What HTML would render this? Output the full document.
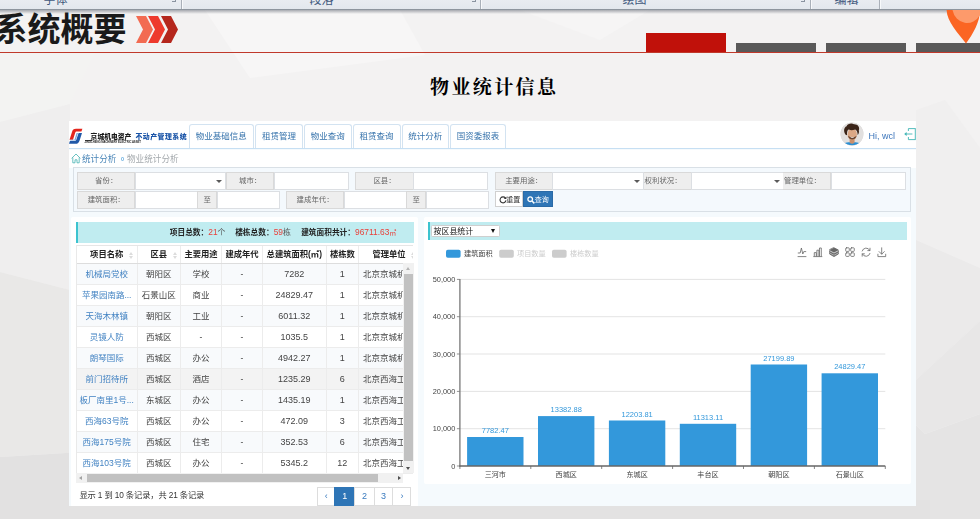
<!DOCTYPE html>
<html lang="zh-CN">
<head>
<meta charset="utf-8">
<title>系统概要 - 物业统计信息</title>
<style>
*{box-sizing:border-box;margin:0;padding:0}
html,body{width:980px;height:519px;overflow:hidden}
body{position:relative;font-family:"Liberation Sans","Noto Sans CJK SC",sans-serif;background:#f3f2f2;color:#333}
.abs{position:absolute}
#bg{position:absolute;left:0;top:0;width:980px;height:519px}
/* ribbon */
#ribbon{position:absolute;left:0;top:0;width:980px;height:10px;background:linear-gradient(#e9ecf1,#e3e7ed);border-bottom:1px solid #8e959e;overflow:hidden}
#ribbon span{position:absolute;top:-5.9px;font-size:12px;line-height:12px;color:#42597d;white-space:nowrap}
#ribbon i{position:absolute;top:0;width:1px;height:9px;background:#aab0b9;box-shadow:1px 0 0 #f8f9fb}
#ribshadow{position:absolute;left:0;top:10px;width:980px;height:4px;background:linear-gradient(rgba(115,120,130,.6),rgba(120,125,135,0))}
#ribbon b{position:absolute;top:-1px;width:4px;height:3px;border-right:1px solid #8a93a0;border-bottom:1px solid #8a93a0}
/* slide title */
#stitle{position:absolute;left:-5.6px;top:7px;font-size:33px;line-height:46px;font-weight:700;color:#1a1a1a;white-space:nowrap;letter-spacing:0}
#redline{position:absolute;left:0;top:52px;width:980px;height:1px;background:#c0392b}
.blk{position:absolute;height:9px;top:43px;background:#595959}
#title2{position:absolute;left:0;top:72.6px;width:988.4px;text-align:center;font-family:"Liberation Serif","Noto Serif CJK SC",serif;font-weight:700;font-size:19px;letter-spacing:2.4px;line-height:30px;color:#000}
/* app */
#app{position:absolute;left:69px;top:121px;width:847px;height:385px;background:#f5fafd;overflow:hidden}
#app>*{filter:blur(.25px)}
#hdr{position:absolute;left:0;top:0;width:847px;height:28px;background:#fff;border-bottom:1.4px solid #c6dff3}
.tab{position:absolute;top:2.8px;height:23.8px;border:1px solid #d3e3f1;border-bottom:none;border-radius:3px 3px 0 0;background:#fff;color:#3572ab;font-size:8.5px;line-height:23px;text-align:center;white-space:nowrap}

#logo1{position:absolute;left:21.6px;top:10.8px;font-size:6.8px;line-height:9px;font-weight:900;color:#1a1a1a;white-space:nowrap;letter-spacing:0}
#logo2{position:absolute;left:15.6px;top:19.4px;width:7px;height:.9px;background:#444}
#logo3{position:absolute;left:15.6px;top:20.2px;font-size:2.75px;line-height:4px;font-weight:700;color:#222;white-space:nowrap;letter-spacing:-.05px}
#logo4{position:absolute;left:66.4px;top:11.4px;font-size:6.9px;line-height:10px;font-weight:900;color:#1b55a8;white-space:nowrap;letter-spacing:.5px}
#hi{position:absolute;left:799.4px;top:8.8px;font-size:9px;line-height:12px;color:#3d76bb;white-space:nowrap}
#crumb{position:absolute;left:0;top:29px;width:847px;height:18px;background:#fff}
#crumb .a{position:absolute;left:13px;top:2.7px;font-size:8.6px;line-height:12px;color:#4a86b8;white-space:nowrap}
#crumb .b{position:absolute;left:58px;top:2.7px;font-size:8.6px;line-height:12px;color:#a4a9ad;white-space:nowrap}
#crumb .dot{position:absolute;left:52px;top:7.2px;width:3px;height:3.6px;border:.8px solid #8fc3e8;border-radius:1px}
#filter{position:absolute;left:4px;top:46.3px;width:838px;height:45.2px;border:1px solid #d9e0e6;background:#f4f9fd}
.fl{position:absolute;height:17.6px;background:#eee;border:1px solid #d9d9d9;font-size:7.4px;line-height:16px;color:#666;text-align:center;white-space:nowrap}
.fi{position:absolute;height:17.6px;background:#fff;border:1px solid #dcdfe3}
.fi.sel:after{content:"";position:absolute;right:3px;top:6.4px;border:3px solid transparent;border-top:3.4px solid #5a5a5a;border-bottom:none}
.fl.la{text-align:left;padding-left:.6px;border-left:none}
.r1{top:4px}.r2{top:23.2px}

.btn{position:absolute;height:16px;font-size:7px;line-height:15px;white-space:nowrap}
#breset{left:420.8px;width:28.6px;background:#fff;border:1px solid #d0d0d0;color:#333;padding-left:10.5px}
#bquery{left:449.2px;width:29.4px;background:#2e75b6;border:1px solid #2a6aa6;color:#fff;padding-left:10.5px}

#lp{position:absolute;left:2.4px;top:95.6px;width:347px;height:290px;background:#fff;border-radius:2px}
#rp{position:absolute;left:355px;top:95.6px;width:486.6px;height:267.6px;background:#fff;border-radius:2px}
.cbar{position:absolute;background:#c0ecf0;border-left:2.6px solid #3cc3cf}
#sum{left:4.4px;top:5px;width:338.4px;height:21px;font-size:7.7px;line-height:20.4px;color:#222;white-space:nowrap;font-weight:700}
#sum span{position:absolute;top:0}
#sum b{font-weight:400;color:#e8403a;font-size:8.4px}
#sum i{font-style:normal;font-weight:400;color:#555;font-size:7.8px}
#tbl{position:absolute;left:4.4px;top:28.8px;width:337.6px;height:229px;border-top:1px solid #e6e6e6;border-left:1px solid #e9e9e9;overflow:hidden}
.tr{position:absolute;left:0;width:340px;height:21px;border-bottom:1px solid #ececec;font-size:8.5px;line-height:20px;color:#444;white-space:nowrap}
.tr.h{height:18px;line-height:17px;font-weight:700;color:#222;font-size:8.3px;border-bottom:1px solid #ddd}
.tr.odd{background:#f8fafc}
.tr.hov{background:#f3f3f3}
.tr span{position:absolute;top:0;height:100%;text-align:center;border-right:1px solid #ececec;overflow:hidden}
.tr span.c1{left:0;width:60.8px;color:#4182c2}
.tr span.c2{left:60.8px;width:43.4px}
.tr span.c3{left:104.2px;width:41.1px}
.tr span.c4{left:145.3px;width:40.8px}
.tr span.c5{left:186.1px;width:63.8px;font-size:9px}
.tr span.c6{left:249.9px;width:32.4px;font-size:9px}
.tr span.c7{left:282.3px;width:62px;text-align:left;padding-left:4px;border-right:none}
.tr.h span.c1{color:#222}
.tr.h span{font-size:8.3px!important}
.tr.h span.c7{text-align:center;padding-left:0;padding-right:2px}
.sort{position:absolute;width:0;height:0;border:2.2px solid transparent}
.sort.u{border-bottom:3px solid #dcdcdc;border-top:none}
.sort.d{border-top:3px solid #dcdcdc;border-bottom:none}
#vsb{position:absolute;left:331.8px;top:46.8px;width:10.8px;height:209.4px;background:#f1f1f1}
#vsb .th{position:absolute;left:.8px;top:10.6px;width:9.4px;height:187.4px;background:#c1c1c1}
#hsb{position:absolute;left:4.4px;top:256.8px;width:327.4px;height:10px;background:#f1f1f1}
#hsb .th{position:absolute;left:11.4px;top:1px;width:290.6px;height:8px;background:#c1c1c1}
.arr{position:absolute;width:0;height:0;border:2.4px solid transparent}
#pinfo{position:absolute;left:8px;top:273.4px;font-size:8.25px;letter-spacing:-.12px;line-height:12px;color:#333;white-space:nowrap}
.pg{position:absolute;top:270px;height:19.4px;border:1px solid #ddd;background:#fff;color:#3a7bbf;font-size:9px;line-height:17.6px;text-align:center}
.pg.on{background:#2e75b6;border-color:#2e75b6;color:#fff}
#csel{position:absolute;left:.6px;top:3px;width:69.2px;height:12.8px;background:#fff;border:1px solid #cfcfcf;border-radius:1.5px;font-size:7.9px;line-height:11px;color:#111;padding-left:2px;white-space:nowrap}
#csel:after{content:"";position:absolute;right:3.4px;top:3.4px;border:2.5px solid transparent;border-top:4.2px solid #111;border-bottom:none}
</style>
</head>
<body>
<svg id="bg" viewBox="0 0 980 519">
<rect width="980" height="519" fill="#f3f2f2"/>
<polygon points="205,10 400,10 425,55 250,78" fill="#f7f6f6"/>
<polygon points="520,10 650,10 600,40" fill="#f6f5f5"/>
<polygon points="0,53 95,53 70,104 0,122" fill="#f3f3f2"/>
<polygon points="0,122 70,104 70,290 0,272" fill="#efeeee"/>
<polygon points="0,272 70,290 70,452.7 0,457" fill="#e9e8e7"/>
<polygon points="0,457 70,452.7 70,519 0,519" fill="#e2e1e1"/>
<polygon points="916,110 945,100 980,148 980,268 916,240" fill="#f0efef"/>
<polygon points="916,240 980,268 980,321 916,380" fill="#ebeaea"/>
<polygon points="916,380 980,321 980,414 925,434 916,425" fill="#e8e7e7"/>
<polygon points="916,425 925,434 980,414 980,519 916,519" fill="#e5e4e4"/>
<rect x="60" y="500" width="870" height="19" fill="#e3e2e2"/>
</svg>
<div id="ribbon">
<span style="left:43.6px">字体</span><span style="left:309.6px">段落</span><span style="left:622.6px">绘图</span><span style="left:834.4px">编辑</span>
<b style="left:172px"></b><b style="left:472px"></b><b style="left:801px"></b><i style="left:181px"></i><i style="left:480px"></i><i style="left:810px"></i><i style="left:879px"></i>
</div>
<div id="ribshadow"></div>
<div id="stitle">系统概要</div>
<svg class="abs" style="left:136px;top:16px" width="44" height="28" viewBox="0 0 44 28">
<polygon points="0,0 10,0 17,13.5 10,27 0,27 7,13.5" fill="#f26b52"/>
<polygon points="12,0 22,0 29,13.5 22,27 12,27 19,13.5" fill="#ee3a2d"/>
<polygon points="25,0 35,0 42,13.5 35,27 25,27 32,13.5" fill="#b5271d"/>
</svg>
<div id="redline"></div>
<div class="blk" style="left:646px;width:80px;top:33px;height:19px;background:#c0110a"></div>
<div class="blk" style="left:736px;width:80px"></div>
<div class="blk" style="left:826px;width:80px"></div>
<div class="blk" style="left:916px;width:64px"></div>
<svg class="abs" style="left:940px;top:10px" width="40" height="36" viewBox="0 0 40 36">
<path d="M6.6,0 C7,12 18,23 26,33.4 C33,24 40,12 40,0 Z" fill="#fb6523"/>
<path d="M12.5,0 A15,16.5 0 0 0 40,5 L40,0 Z" fill="#fd9a6b"/>
</svg>
<div id="title2">物业统计信息</div>
<div id="app">
<div id="hdr">
<svg class="abs" style="left:0;top:7px" width="15" height="17" viewBox="0 0 15 17">
<path d="M13.4,0.8 L7,0.8 C4.6,0.8 3.6,2 3,4 L0.5,11.8 L4,11.8 L6.2,4.8 C6.4,4 7,3.6 7.8,3.6 L12.4,3.6 Z" fill="#e3261d"/>
<path d="M9.6,5 L13,5 L10.6,12.4 C10,14.4 8.8,15.8 6.4,15.8 L0,15.8 L0.9,13 L5.6,13 C6.6,13 7.2,12.4 7.4,11.6 Z" fill="#1f58a8"/>
<path d="M7.6,5 L9,5 L6.9,11.4 C6.7,12 6.2,12.4 5.6,12.4 L1.1,12.4 L1.3,11.8 L5,11.8 C5.4,11.8 5.6,11.6 5.7,11.2 Z" fill="#7ba6dc"/>
</svg>
<div id="logo1">京城机电资产</div><div id="logo2"></div><div id="logo3">JINGCHENG MACHINERY ELECTRIC ASSET</div>
<div id="logo4">不动产管理系统</div>
<div class="tab" style="left:119.5px;width:65.5px">物业基础信息</div>
<div class="tab" style="left:186px;width:48px">租赁管理</div>
<div class="tab" style="left:235px;width:47.5px">物业查询</div>
<div class="tab" style="left:283.5px;width:48px">租赁查询</div>
<div class="tab" style="left:332.5px;width:47.5px">统计分析</div>
<div class="tab" style="left:381px;width:56px">国资委报表</div>
<svg class="abs" style="left:771px;top:1px" width="24" height="24" viewBox="0 0 24 24">
<defs><clipPath id="avc"><circle cx="12" cy="12" r="11.3"/></clipPath></defs>
<circle cx="12" cy="12" r="11.5" fill="#dcdad8"/>
<g clip-path="url(#avc)">
<rect x="0" y="0" width="24" height="24" fill="#e2e0df"/>
<path d="M2,24 C3.4,20.6 7,20.2 12,20.2 C17,20.2 20.6,20.6 22,24 Z" fill="#2a8fd4"/>
<path d="M9.6,16 h5 v4.6 c-1.6,1.6 -3.4,1.6 -5,0 z" fill="#c98f6c"/>
<ellipse cx="12.2" cy="12.4" rx="4.7" ry="5.9" fill="#dba886"/>
<path d="M5.6,12.8 C3.4,9.6 3.6,5.4 6.6,4.2 C7.4,1.6 11.6,0.8 14,2.2 C17.6,2 20.2,5 18.8,8.6 C19.4,10.4 18.6,12.2 17.6,13 C17.8,10.2 16.8,8.2 15.2,7.4 C12.6,8.6 9.4,8.2 8.2,7.6 C7,9 7,11 7,13.2 Z" fill="#3b2519"/>
<path d="M8,13.4 C8.4,18.8 16,18.8 16.6,13.4 C15.4,15.6 9.4,15.6 8,13.4 Z" fill="#6a4530"/>
<path d="M10,14.6 C11.4,15.6 13.4,15.6 14.6,14.6 C13.8,16.4 10.8,16.4 10,14.6 Z" fill="#fff"/>
</g>
</svg>
<div id="hi">Hi, wcl</div>
<svg class="abs" style="left:834px;top:6px" width="13" height="15" viewBox="0 0 13 15">
<path d="M5.4,4 V1.6 H12.6 M5.4,10 V12.6 H12.6 M12.3,1.6 V12.6" fill="none" stroke="#41b5b5" stroke-width=".9"/>
<path d="M9.4,7 H2.6" fill="none" stroke="#41b5b5" stroke-width=".9"/><path d="M1.2,7 L3.6,5 V9 Z" fill="#41b5b5"/>
</svg>
</div>
<div id="crumb">
<svg class="abs" style="left:2px;top:2.8px" width="10" height="11" viewBox="0 0 10 11"><path d="M0.6,5.4 L5,1 L9.4,5.4 M1.8,4.6 V9.8 H4 V6.8 H6 V9.8 H8.2 V4.6" fill="none" stroke="#45b3b3" stroke-width=".8"/></svg>
<div class="a">统计分析</div><div class="dot"></div><div class="b">物业统计分析</div>
</div>
<div id="filter">
<div class="fl r1" style="left:3.4px;width:57.6px">省份：</div><div class="fi sel r1" style="left:60.6px;width:91.6px"></div>
<div class="fl r1" style="left:151.8px;width:48.6px;background:#eee">城市：</div><div class="fi r1" style="left:200px;width:75.2px"></div>
<div class="fl r1" style="left:281.4px;width:58.2px">区县：</div><div class="fi r1" style="left:339.2px;width:75px"></div>
<div class="fl r1" style="left:420.6px;width:58.2px">主要用途：</div><div class="fi sel r1" style="left:478.4px;width:92px"></div>
<div class="fl r1 la" style="left:570px;width:47.8px">权利状况：</div><div class="fi sel r1" style="left:617.4px;width:92.4px"></div>
<div class="fl r1 la" style="left:709.4px;width:47.6px">管理单位：</div><div class="fi r1" style="left:756.6px;width:75px"></div>
<div class="fl r2" style="left:3.4px;width:57.6px">建筑面积：</div><div class="fi r2" style="left:60.6px;width:63px"></div>
<div class="fl r2" style="left:123.2px;width:19.8px">至</div><div class="fi r2" style="left:142.6px;width:63px"></div>
<div class="fl r2" style="left:212.2px;width:57.8px">建成年代：</div><div class="fi r2" style="left:269.6px;width:63px"></div>
<div class="fl r2" style="left:332.2px;width:20px">至</div><div class="fi r2" style="left:351.8px;width:63px"></div>
<div class="btn r2" id="breset"><svg class="abs" style="left:3px;top:3.4px" width="8" height="8" viewBox="0 0 8 8"><path d="M6.4,2 A3,3 0 1 0 7,4.4" fill="none" stroke="#333" stroke-width="1.1"/><path d="M7.4,0.4 V3 H4.8 Z" fill="#333"/></svg>重置</div><div class="btn r2" id="bquery"><svg class="abs" style="left:3px;top:3.4px" width="8" height="8" viewBox="0 0 8 8"><circle cx="3.2" cy="3.2" r="2.3" fill="none" stroke="#fff" stroke-width="1.3"/><path d="M5,5 L7.4,7.4" stroke="#fff" stroke-width="1.5"/></svg>查询</div>
</div>
<div id="lp">
<div class="cbar" id="sum"><span style="left:92px">项目总数：<b>21</b><i>个</i></span><span style="left:157.4px">楼栋总数：<b>59</b><i>栋</i></span><span style="left:223.4px">建筑面积共计：<b>96711.63</b><i style="color:#e8403a;font-size:7px">㎡</i></span></div>
<div id="tbl">
<div class="tr h" style="top:0"><span class="c1">项目名称</span><span class="c2">区县</span><span class="c3">主要用途</span><span class="c4">建成年代</span><span class="c5">总建筑面积(㎡)</span><span class="c6">楼栋数</span><span class="c7">管理单位</span><i class="sort u" style="left:52px;top:5.4px"></i><i class="sort d" style="left:52px;top:9.8px"></i><i class="sort u" style="left:96px;top:5.4px"></i><i class="sort d" style="left:96px;top:9.8px"></i><i class="sort u" style="left:334.6px;top:5.4px"></i><i class="sort d" style="left:334.6px;top:9.8px"></i></div>
<div class="tr odd" style="top:18.0px"><span class="c1">机械局党校</span><span class="c2">朝阳区</span><span class="c3">学校</span><span class="c4">-</span><span class="c5">7282</span><span class="c6">1</span><span class="c7">北京京城机电</span></div>
<div class="tr" style="top:39.0px"><span class="c1">苹果园南路...</span><span class="c2">石景山区</span><span class="c3">商业</span><span class="c4">-</span><span class="c5">24829.47</span><span class="c6">1</span><span class="c7">北京京城机电</span></div>
<div class="tr odd" style="top:60.0px"><span class="c1">天海木林镇</span><span class="c2">朝阳区</span><span class="c3">工业</span><span class="c4">-</span><span class="c5">6011.32</span><span class="c6">1</span><span class="c7">北京京城机电</span></div>
<div class="tr" style="top:81.0px"><span class="c1">灵镜人防</span><span class="c2">西城区</span><span class="c3">-</span><span class="c4">-</span><span class="c5">1035.5</span><span class="c6">1</span><span class="c7">北京京城机电</span></div>
<div class="tr odd" style="top:102.0px"><span class="c1">朗琴国际</span><span class="c2">西城区</span><span class="c3">办公</span><span class="c4">-</span><span class="c5">4942.27</span><span class="c6">1</span><span class="c7">北京京城机电</span></div>
<div class="tr hov" style="top:123.0px"><span class="c1">前门招待所</span><span class="c2">西城区</span><span class="c3">酒店</span><span class="c4">-</span><span class="c5">1235.29</span><span class="c6">6</span><span class="c7">北京西海工贸</span></div>
<div class="tr odd" style="top:144.0px"><span class="c1">板厂南里1号...</span><span class="c2">东城区</span><span class="c3">办公</span><span class="c4">-</span><span class="c5">1435.19</span><span class="c6">1</span><span class="c7">北京西海工贸</span></div>
<div class="tr" style="top:165.0px"><span class="c1">西海63号院</span><span class="c2">西城区</span><span class="c3">办公</span><span class="c4">-</span><span class="c5">472.09</span><span class="c6">3</span><span class="c7">北京西海工贸</span></div>
<div class="tr odd" style="top:186.0px"><span class="c1">西海175号院</span><span class="c2">西城区</span><span class="c3">住宅</span><span class="c4">-</span><span class="c5">352.53</span><span class="c6">6</span><span class="c7">北京西海工贸</span></div>
<div class="tr" style="top:207.0px"><span class="c1">西海103号院</span><span class="c2">西城区</span><span class="c3">办公</span><span class="c4">-</span><span class="c5">5345.2</span><span class="c6">12</span><span class="c7">北京西海工贸</span></div>
</div>
<div id="vsb"><i class="arr" style="left:2.6px;top:3.2px;border-width:2.9px;border-bottom:3.4px solid #b4b4b4;border-top:none"></i><div class="th"></div><i class="arr" style="left:2.6px;bottom:3px;border-width:2.9px;border-top:3.4px solid #505050;border-bottom:none"></i></div>
<div id="hsb"><i class="arr" style="left:3px;top:2.2px;border-width:2.8px;border-right:3.6px solid #a3a3a3;border-left:none"></i><div class="th"></div><i class="arr" style="right:2.6px;top:2.2px;border-width:2.8px;border-left:3.6px solid #505050;border-right:none"></i></div>
<div id="pinfo">显示 1 到 10 条记录，共 21 条记录</div>
<div class="pg" style="left:245.9px;width:17.9px">‹</div><div class="pg on" style="left:262.8px;width:21.0px">1</div><div class="pg" style="left:282.8px;width:20.5px">2</div><div class="pg" style="left:302.3px;width:19.8px">3</div><div class="pg" style="left:321.1px;width:19.0px">›</div>
</div>
<div id="rp">
<div class="cbar" style="left:4px;top:5px;width:479px;height:18.6px"><div id="csel">按区县统计</div></div>
<svg class="abs" style="left:0;top:0" width="486.6" height="267.6" viewBox="0 0 486.6 267.6" font-family="Liberation Sans, Noto Sans CJK SC, sans-serif">
<rect x="22" y="32.8" width="14.6" height="8" rx="1.8" fill="#3398db"/><text x="40" y="39.4" font-size="7.2" fill="#444">建筑面积</text>
<rect x="75.2" y="32.8" width="14.6" height="8" rx="1.8" fill="#ccc"/><text x="93" y="39.4" font-size="7.2" fill="#ccc">项目数量</text>
<rect x="128" y="32.8" width="14.6" height="8" rx="1.8" fill="#ccc"/><text x="146" y="39.4" font-size="7.2" fill="#ccc">楼栋数量</text>
<line x1="35.9" y1="211.7" x2="461.3" y2="211.7" stroke="#dcdcdc" stroke-width="0.8"/><line x1="35.9" y1="174.4" x2="461.3" y2="174.4" stroke="#dcdcdc" stroke-width="0.8"/><line x1="35.9" y1="137.0" x2="461.3" y2="137.0" stroke="#dcdcdc" stroke-width="0.8"/><line x1="35.9" y1="99.7" x2="461.3" y2="99.7" stroke="#dcdcdc" stroke-width="0.8"/><line x1="35.9" y1="62.4" x2="461.3" y2="62.4" stroke="#dcdcdc" stroke-width="0.8"/>
<rect x="43.1" y="220.0" width="56.4" height="29.0" fill="#3398db"/><text x="71.3" y="216.2" font-size="7.5" fill="#3398db" text-anchor="middle">7782.47</text><text x="71.3" y="259.9" font-size="7.1" fill="#444" text-anchor="middle">三河市</text>
<rect x="114.0" y="199.1" width="56.4" height="49.9" fill="#3398db"/><text x="142.2" y="195.3" font-size="7.5" fill="#3398db" text-anchor="middle">13382.88</text><text x="142.2" y="259.9" font-size="7.1" fill="#444" text-anchor="middle">西城区</text>
<rect x="184.9" y="203.5" width="56.4" height="45.5" fill="#3398db"/><text x="213.1" y="199.7" font-size="7.5" fill="#3398db" text-anchor="middle">12203.81</text><text x="213.1" y="259.9" font-size="7.1" fill="#444" text-anchor="middle">东城区</text>
<rect x="255.8" y="206.8" width="56.4" height="42.2" fill="#3398db"/><text x="284.0" y="203.0" font-size="7.5" fill="#3398db" text-anchor="middle">11313.11</text><text x="284.0" y="259.9" font-size="7.1" fill="#444" text-anchor="middle">丰台区</text>
<rect x="326.7" y="147.5" width="56.4" height="101.5" fill="#3398db"/><text x="354.9" y="143.7" font-size="7.5" fill="#3398db" text-anchor="middle">27199.89</text><text x="354.9" y="259.9" font-size="7.1" fill="#444" text-anchor="middle">朝阳区</text>
<rect x="397.6" y="156.3" width="56.4" height="92.7" fill="#3398db"/><text x="425.8" y="152.5" font-size="7.5" fill="#3398db" text-anchor="middle">24829.47</text><text x="425.8" y="259.9" font-size="7.1" fill="#444" text-anchor="middle">石景山区</text>
<line x1="35.9" y1="61.9" x2="35.9" y2="249.6" stroke="#777" stroke-width="1.3"/><line x1="35.3" y1="249.0" x2="461.3" y2="249.0" stroke="#666" stroke-width="1.3"/>
<line x1="32.9" y1="249.0" x2="35.9" y2="249.0" stroke="#777" stroke-width="0.8"/><text x="31.3" y="251.6" font-size="7.4" fill="#444" text-anchor="end">0</text>
<line x1="32.9" y1="211.7" x2="35.9" y2="211.7" stroke="#777" stroke-width="0.8"/><text x="31.3" y="214.3" font-size="7.4" fill="#444" text-anchor="end">10,000</text>
<line x1="32.9" y1="174.4" x2="35.9" y2="174.4" stroke="#777" stroke-width="0.8"/><text x="31.3" y="177.0" font-size="7.4" fill="#444" text-anchor="end">20,000</text>
<line x1="32.9" y1="137.0" x2="35.9" y2="137.0" stroke="#777" stroke-width="0.8"/><text x="31.3" y="139.6" font-size="7.4" fill="#444" text-anchor="end">30,000</text>
<line x1="32.9" y1="99.7" x2="35.9" y2="99.7" stroke="#777" stroke-width="0.8"/><text x="31.3" y="102.3" font-size="7.4" fill="#444" text-anchor="end">40,000</text>
<line x1="32.9" y1="62.4" x2="35.9" y2="62.4" stroke="#777" stroke-width="0.8"/><text x="31.3" y="65.0" font-size="7.4" fill="#444" text-anchor="end">50,000</text>
<line x1="35.9" y1="249.0" x2="35.9" y2="252.0" stroke="#666" stroke-width="0.8"/><line x1="106.8" y1="249.0" x2="106.8" y2="252.0" stroke="#666" stroke-width="0.8"/><line x1="177.7" y1="249.0" x2="177.7" y2="252.0" stroke="#666" stroke-width="0.8"/><line x1="248.6" y1="249.0" x2="248.6" y2="252.0" stroke="#666" stroke-width="0.8"/><line x1="319.5" y1="249.0" x2="319.5" y2="252.0" stroke="#666" stroke-width="0.8"/><line x1="390.4" y1="249.0" x2="390.4" y2="252.0" stroke="#666" stroke-width="0.8"/><line x1="461.3" y1="249.0" x2="461.3" y2="252.0" stroke="#666" stroke-width="0.8"/>
<g transform="translate(373.8,30.4)" fill="none" stroke="#666" stroke-width="0.8" stroke-linejoin="round" stroke-linecap="round"><path d="M0.4,5.6 H2.4 L3.6,0.6 L5,6.6 L6,4.2 H8"/><path d="M0.2,9.2 H8.2"/></g>
<g transform="translate(389.7,30.4)" fill="none" stroke="#666" stroke-width="0.8" stroke-linejoin="round" stroke-linecap="round"><path d="M0.6,8.6 V5.2 H2.6 V8.6 M3.2,8.6 V2.8 H5.2 V8.6 M5.8,8.6 V0.6 H7.6 V8.6"/><path d="M0,9.2 H8.2"/></g>
<g transform="translate(405.4,30.4)" fill="none" stroke="#666" stroke-width="0.8" stroke-linejoin="round" stroke-linecap="round"><path d="M4.6,0.4 L9,2.6 V6.6 L4.6,9.2 L0.2,6.6 V2.6 Z" fill="#666" stroke="#666"/><path d="M0.4,3.4 L4.6,5.6 L8.8,3.4" stroke="#fff" stroke-width="0.7"/><path d="M0.4,5.6 L4.6,7.8 L8.8,5.6" stroke="#fff" stroke-width="0.5"/></g>
<g transform="translate(421.3,30.4)" fill="none" stroke="#666" stroke-width="0.8" stroke-linejoin="round" stroke-linecap="round"><rect x="0.4" y="0.4" width="3.6" height="3.6" rx="0.8"/><rect x="5.4" y="0.4" width="3.6" height="3.6" rx="0.8"/><rect x="0.4" y="5.4" width="3.6" height="3.6" rx="0.8"/><rect x="5.4" y="5.4" width="3.6" height="3.6" rx="0.8"/></g>
<g transform="translate(437.2,30.4)" fill="none" stroke="#666" stroke-width="0.8" stroke-linejoin="round" stroke-linecap="round"><path d="M1,3.6 A4.1,4.1 0 0 1 8.6,3 M8.8,6 A4.1,4.1 0 0 1 1.2,6.6"/><path d="M8.8,0.8 V3.2 H6.6 M1,8.8 V6.4 H3.2"/></g>
<g transform="translate(453.5,30.4)" fill="none" stroke="#666" stroke-width="0.8" stroke-linejoin="round" stroke-linecap="round"><path d="M4.2,0.4 V6.6 M1.6,4.2 L4.2,6.8 L6.8,4.2"/><path d="M0.4,6.8 V9.2 H8.2 V6.8"/></g>
</svg>
</div>
</div>
</body>
</html>
